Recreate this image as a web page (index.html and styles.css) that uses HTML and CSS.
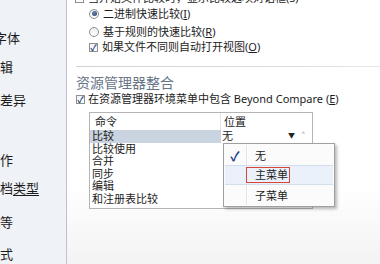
FILE: index.html
```html
<!DOCTYPE html>
<html lang="zh-CN">
<head>
  <meta charset="UTF-8">
  <meta name="viewport" content="width=device-width, initial-scale=1.0">
  <title>选项</title>
  <link rel="stylesheet" href="styles.css">
</head>
<body>
  <div class="window">
    <aside class="nav">
      <div class="nav-item">字体</div>
      <div class="nav-item cut">编辑</div>
      <div class="nav-item">差异</div>
      <div class="nav-item cut">操作</div>
      <div class="nav-item cut">文档<u>类型</u></div>
      <div class="nav-item cut">相等</div>
      <div class="nav-item cut">格式</div>
    </aside>

    <main class="pane">
      <div class="row row-top">
        <span class="box check"></span>当开始文件比较时，显示比较选项对话框(S)
      </div>
      <div class="row row-opt1 indent">
        <span class="box radio on"></span>二进制快速比较(<u>I</u>)
      </div>
      <div class="row row-opt2 indent">
        <span class="box radio"></span>基于规则的快速比较(<u>R</u>)
      </div>
      <div class="row row-opt3 indent">
        <span class="box check on">✓</span>如果文件不同则自动打开视图(<u>O</u>)
      </div>

      <div class="sep"></div>
      <h3 class="group">资源管理器整合</h3>

      <div class="row row-shell">
        <span class="box check on">✓</span>在资源管理器环境菜单中包含 Beyond Compare (<u>E</u>)
      </div>

      <div class="listbox">
        <div class="lb-head">
          <span class="col-cmd">命令</span>
          <span class="col-pos">位置</span>
        </div>
        <div class="lb-row sel">
          <span class="col-cmd">比较</span>
          <span class="combo">无<span class="arrow">▼</span></span>
          <span class="scroll-up">˄</span>
        </div>
        <div class="lb-row"><span class="col-cmd">比较使用</span></div>
        <div class="lb-row"><span class="col-cmd">合并</span></div>
        <div class="lb-row"><span class="col-cmd">同步</span></div>
        <div class="lb-row"><span class="col-cmd">编辑</span></div>
        <div class="lb-row"><span class="col-cmd">和注册表比较</span></div>
      </div>

      <!-- dropdown of the 位置 combo -->
      <div class="menu">
        <div class="menu-item"><span class="menu-icon">✓</span><span class="menu-text">无</span></div>
        <div class="menu-item hover"><span class="menu-icon"></span><span class="menu-text mark">主菜单</span></div>
        <div class="menu-item"><span class="menu-icon"></span><span class="menu-text">子菜单</span></div>
      </div>
    </main>
  </div>
</body>
</html>
```

FILE: styles.css
```css
body {
  margin: 0;
  padding: 0;
  font-family: "Noto Sans", "Noto Sans CJK SC", sans-serif;
  color: #1c1c1c;
}
.window {
  width: 380px;
  height: 264px;
  display: flex;
  overflow: hidden;
}
.nav {
  width: 67px;
  flex-shrink: 0;
  background: #eff2f6;
  border-right: 1px solid #bfc3c9;
  overflow: hidden;
  font-size: 13px;
  padding-top: 30px;
  box-sizing: border-box;
}
.nav-item {
  height: 16px;
  line-height: 16px;
  white-space: nowrap;
  margin-left: -6px;
}
.nav-item.cut {
  margin-left: -13px;
}
.nav-item:nth-child(2) { margin-top: 13px; }
.nav-item:nth-child(3) { margin-top: 17px; margin-left: 0; }
.nav-item:nth-child(4) { margin-top: 44px; }
.nav-item:nth-child(5) { margin-top: 12px; }
.nav-item:nth-child(6) { margin-top: 18px; }
.nav-item:nth-child(7) { margin-top: 16px; }
.nav-item u {
  text-decoration-thickness: 1px;
  text-underline-offset: 2px;
}

.pane {
  position: relative;
  flex: 1;
  padding-left: 9px;
  background: linear-gradient(to bottom, #ffffff 0%, #ffffff 70%, #f3f3f3 100%);
  font-size: 11px;
}
.row {
  display: flex;
  align-items: center;
  height: 14px;
  line-height: 14px;
  white-space: nowrap;
}
.row u {
  text-decoration-thickness: 1px;
}
.row-top { margin-top: -9px; margin-left: -1px; }
.row-opt1 { margin-top: 1.5px; }
.row-opt2 { margin-top: 4.5px; }
.row-opt3 { margin-top: 1px; margin-left: 14px; }
.indent { margin-left: 13px; }

.box {
  width: 9px;
  height: 9px;
  margin-right: 4px;
  flex-shrink: 0;
  box-sizing: border-box;
  display: inline-flex;
  align-items: center;
  justify-content: center;
  font-size: 9px;
  line-height: 9px;
  color: #23407a;
  font-weight: bold;
}
.check {
  border: 1px solid #8e8f8f;
  background: linear-gradient(#f4f4f4, #ffffff);
}
.radio {
  width: 10px;
  height: 10px;
  border: 1px solid #8e8f8f;
  border-radius: 50%;
  background: linear-gradient(#ececec, #ffffff);
}
.radio.on::after {
  content: "";
  width: 5px;
  height: 5px;
  border-radius: 50%;
  background: radial-gradient(circle at 40% 35%, #6c88b8, #1f3766);
}

.sep {
  height: 1px;
  margin-top: 12px;
  background: linear-gradient(to right, #d2d2d2, #dcdcdc 70%, #e8e8e8);
}
.group {
  margin: 6px 0 0;
  height: 18px;
  line-height: 18px;
  font-size: 14px;
  font-weight: normal;
  color: #687587;
  font-family: "Noto Sans CJK SC", sans-serif;
}
.row-shell { margin-top: 1px; }
.row-shell .box { margin-right: 3px; }

.listbox {
  margin: 6px 0 0 13px;
  width: 224px;
  height: 97px;
  border: 1px solid #b4b4b4;
  box-sizing: border-box;
  background: #fff;
  font-size: 11px;
}
.lb-head {
  display: flex;
  height: 17px;
  line-height: 17px;
}
.lb-head .col-cmd {
  padding-left: 5px;
  border-right: 1px solid #e3e3e3;
}
.col-cmd {
  width: 131px;
  flex-shrink: 0;
  box-sizing: border-box;
  padding-left: 2px;
  white-space: nowrap;
}
.col-pos {
  padding-left: 3px;
}
.lb-row {
  display: flex;
  height: 12.5px;
  line-height: 12.5px;
}
.lb-row.sel .col-cmd {
  background: #cad4e0;
}
.combo {
  display: flex;
  justify-content: space-between;
  width: 76px;
  padding-left: 1px;
  padding-right: 2px;
  box-sizing: border-box;
}
.arrow {
  font-size: 7px;
  color: #222;
}
.scroll-up {
  margin-left: 5px;
  font-size: 10px;
  color: #666;
}

.menu {
  position: absolute;
  left: 156px;
  top: 143px;
  width: 112px;
  height: 64px;
  box-sizing: border-box;
  padding: 1px;
  border: 1px solid #a0a0a0;
  background: #fbfbfb;
  box-shadow: 2px 2px 3px rgba(0, 0, 0, 0.28);
}
.menu::before {
  content: "";
  position: absolute;
  left: 22px;
  top: 1px;
  bottom: 1px;
  width: 1px;
  background: #e2e3e3;
  border-right: 1px solid #ffffff;
}
.menu-item {
  position: relative;
  display: flex;
  align-items: center;
  height: 20px;
  box-sizing: border-box;
}
.menu-item.hover {
  background: #ebf1fa;
  border-top: 1px solid #d3deec;
  border-bottom: 1px solid #d3deec;
}
.menu-icon {
  width: 20px;
  text-align: center;
  font-size: 13px;
  font-weight: bold;
  color: #1d3f8f;
}
.menu-text {
  margin-left: 10px;
  font-size: 11px;
}
.menu-text.mark {
  margin-left: 1px;
  padding: 0 1px 0 8px;
  height: 14px;
  line-height: 14px;
  border: 1.5px solid #d6473a;
}
```
